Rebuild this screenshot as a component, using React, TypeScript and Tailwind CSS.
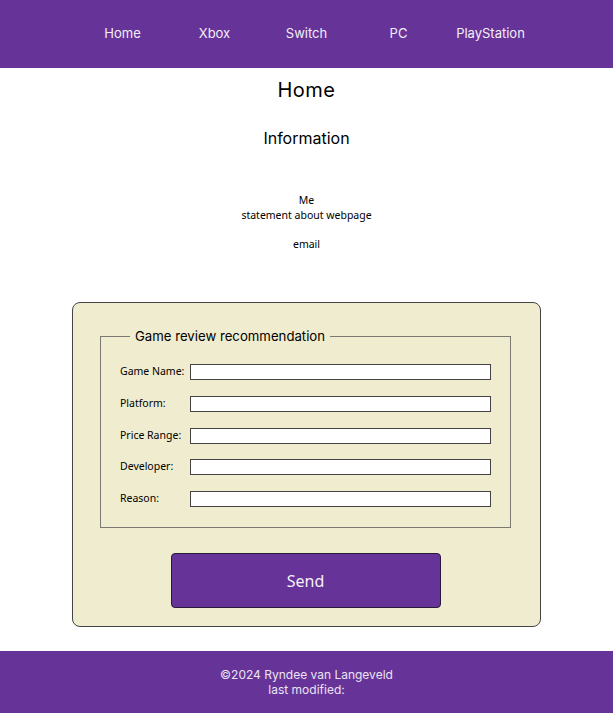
import React from "react";

const navItems = ["Home", "Xbox", "Switch", "PC", "PlayStation"];

const fields = ["Game Name:", "Platform:", "Price Range:", "Developer:", "Reason:"];

export default function App() {
    return (
        <div className="min-h-[714px] bg-white flex flex-col text-black" style={{fontFamily: "Inter, 'Noto Sans', sans-serif"}}>
            {/* Header */}
            <header className="h-[68px] bg-[#663399] flex items-center justify-center">
                <nav className="flex">
                    {navItems.map((item) => (
                        <a key={item} href="#" className="w-[92px] text-center text-[13px] text-[#f3eef7]">
                            {item}
                        </a>
                    ))}
                </nav>
            </header>

            <main className="flex flex-col items-center">
                <h1 className="mt-[10px] text-[20px] leading-[24px] tracking-[0.5px]">Home</h1>
                <h2 className="mt-[26px] text-[16px] leading-[20px]">Information</h2>

                <div className="mt-[45px] text-center text-[10.5px] leading-[14.5px]" style={{fontFamily: "'Noto Sans', sans-serif"}}>
                    <p>Me</p>
                    <p>statement about webpage</p>
                    <p>&nbsp;</p>
                    <p>email</p>
                </div>

                {/* Form */}
                <form className="mt-[51px] w-[469px] bg-[#f0eccf] border border-[#444] rounded-[8px] pl-[27px] pr-[29px] pt-[25px] pb-[18px] flex flex-col items-center">
                    <fieldset className="w-[411px] border border-[#7a7a72] pl-[19px] pr-[19px] pt-[20px] pb-[20px]">
                        <legend className="ml-[10px] px-[5px] text-[13.2px] leading-[16px]">Game review recommendation</legend>
                        <div className="flex flex-col gap-[15.75px]" style={{fontFamily: "'Noto Sans', sans-serif"}}>
                            {fields.map((f) => (
                                <label key={f} className="flex items-center h-[16px] text-[10.5px]">
                                    <span className="w-[70px] shrink-0">{f}</span>
                                    <input type="text" className="w-[301px] h-[16px] bg-white border border-[#444]" />
                                </label>
                            ))}
                        </div>
                    </fieldset>
                    <button type="button" className="mt-[25px] w-[270px] h-[55px] bg-[#663399] border border-[#2a1a3a] rounded-[4px] text-[16px] text-[#f6f0fa]" style={{fontFamily: "'Noto Sans', sans-serif"}}>
                        Send
                    </button>
                </form>
            </main>

            <footer className="mt-[24px] h-[62px] bg-[#663399] flex flex-col items-center justify-center text-[12px] leading-[15px] text-[#ece3f2]">
                <p>©2024 Ryndee van Langeveld</p>
                <p>last modified:</p>
            </footer>
        </div>
    );
}
